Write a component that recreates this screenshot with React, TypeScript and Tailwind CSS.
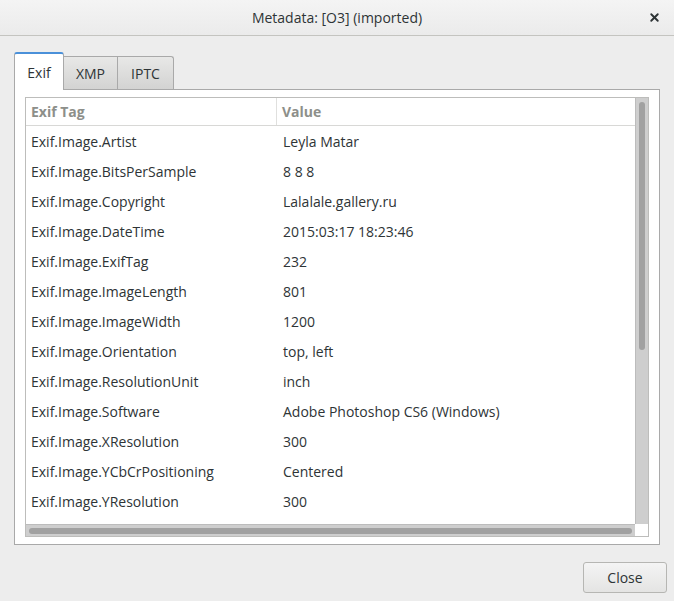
import { X } from "lucide-react"

const rows: [string, string][] = [
  ["Exif.Image.Artist", "Leyla Matar"],
  ["Exif.Image.BitsPerSample", "8 8 8"],
  ["Exif.Image.Copyright", "Lalalale.gallery.ru"],
  ["Exif.Image.DateTime", "2015:03:17 18:23:46"],
  ["Exif.Image.ExifTag", "232"],
  ["Exif.Image.ImageLength", "801"],
  ["Exif.Image.ImageWidth", "1200"],
  ["Exif.Image.Orientation", "top, left"],
  ["Exif.Image.ResolutionUnit", "inch"],
  ["Exif.Image.Software", "Adobe Photoshop CS6 (Windows)"],
  ["Exif.Image.XResolution", "300"],
  ["Exif.Image.YCbCrPositioning", "Centered"],
  ["Exif.Image.YResolution", "300"],
]

export default function App() {
  return (
    <div
      className="w-[674px] h-[601px] bg-[#ededed] text-[#2e3436] flex flex-col overflow-hidden"
      style={{ fontFamily: '"Open Sans", "Noto Sans", sans-serif' }}
    >
      {/* Title bar */}
      <div className="h-[36px] flex-shrink-0 border-b border-[#c4c4c0] bg-gradient-to-b from-[#f4f4f4] to-[#ebebeb] flex items-center justify-center relative">
        <span className="text-[14px] text-[#2e3436]">Metadata: [O3] (imported)</span>
        <X className="absolute right-[13px] top-[11px] w-[13px] h-[13px] text-[#2e3436]" strokeWidth={3.5} />
      </div>

      {/* Notebook */}
      <div className="ml-[14px] mt-[15px] w-[646px] flex flex-col">
        <div className="flex items-end h-[38px] text-[14px]">
          <div className="h-[38px] w-[50px] bg-white border border-b-0 border-[#a9a9a9] border-t-2 border-t-[#4a90d9] rounded-t-[3px] flex items-center justify-center -mb-px relative z-10">
            Exif
          </div>
          <div className="h-[33px] w-[54px] bg-gradient-to-b from-[#e8e8e7] to-[#d3d3d2] border border-l-0 border-b-0 border-[#a9a9a9] flex items-center justify-center">
            XMP
          </div>
          <div className="h-[33px] w-[56px] bg-gradient-to-b from-[#e8e8e7] to-[#d3d3d2] border border-l-0 border-b-0 border-[#a9a9a9] rounded-tr-[3px] flex items-center justify-center">
            IPTC
          </div>
        </div>
        <div className="h-[456px] bg-white border border-[#a9a9a9] pt-[7px] pl-[10px] pr-[10px]">
          {/* Tree view */}
          <div className="w-[624px] h-[440px] border border-[#bdbdbb] flex flex-col text-[14px]">
            <div className="flex flex-1 min-h-0">
              <div className="flex-1 flex flex-col min-w-0">
                <div className="h-[28px] flex-shrink-0 flex border-b border-[#d8d8d6] font-bold text-[#8d8f8a]">
                  <div className="w-[251px] border-r border-[#e0e0de] pl-[5px] flex items-center">Exif Tag</div>
                  <div className="pl-[5px] flex items-center">Value</div>
                </div>
                {rows.map(([tag, value]) => (
                  <div key={tag} className="h-[30px] flex items-center flex-shrink-0">
                    <div className="w-[251px] pl-[5px]">{tag}</div>
                    <div className="pl-[6px]">{value}</div>
                  </div>
                ))}
              </div>
              {/* vertical scrollbar */}
              <div className="w-[13px] bg-[#cecece] border-l border-[#bcbcbc] flex-shrink-0 flex justify-center pt-[4px]">
                <div className="w-[6px] h-[248px] rounded-full bg-[#a1a1a1]" />
              </div>
            </div>
            {/* horizontal scrollbar */}
            <div className="h-[12px] flex flex-shrink-0">
              <div className="flex-1 bg-[#cecece] border-t border-[#bcbcbc] flex items-center px-[3px]">
                <div className="h-[6px] w-full rounded-full bg-[#a1a1a1]" />
              </div>
              <div className="w-[13px] bg-white" />
            </div>
          </div>
        </div>
      </div>

      {/* Buttons */}
      <div className="flex justify-end pr-[7px] mt-[17px]">
        <button className="w-[84px] h-[31px] rounded-[3px] border border-[#b6b6b3] bg-gradient-to-b from-[#f4f4f4] to-[#e4e4e3] text-[14px] text-[#2e3436]">
          Close
        </button>
      </div>
    </div>
  )
}
